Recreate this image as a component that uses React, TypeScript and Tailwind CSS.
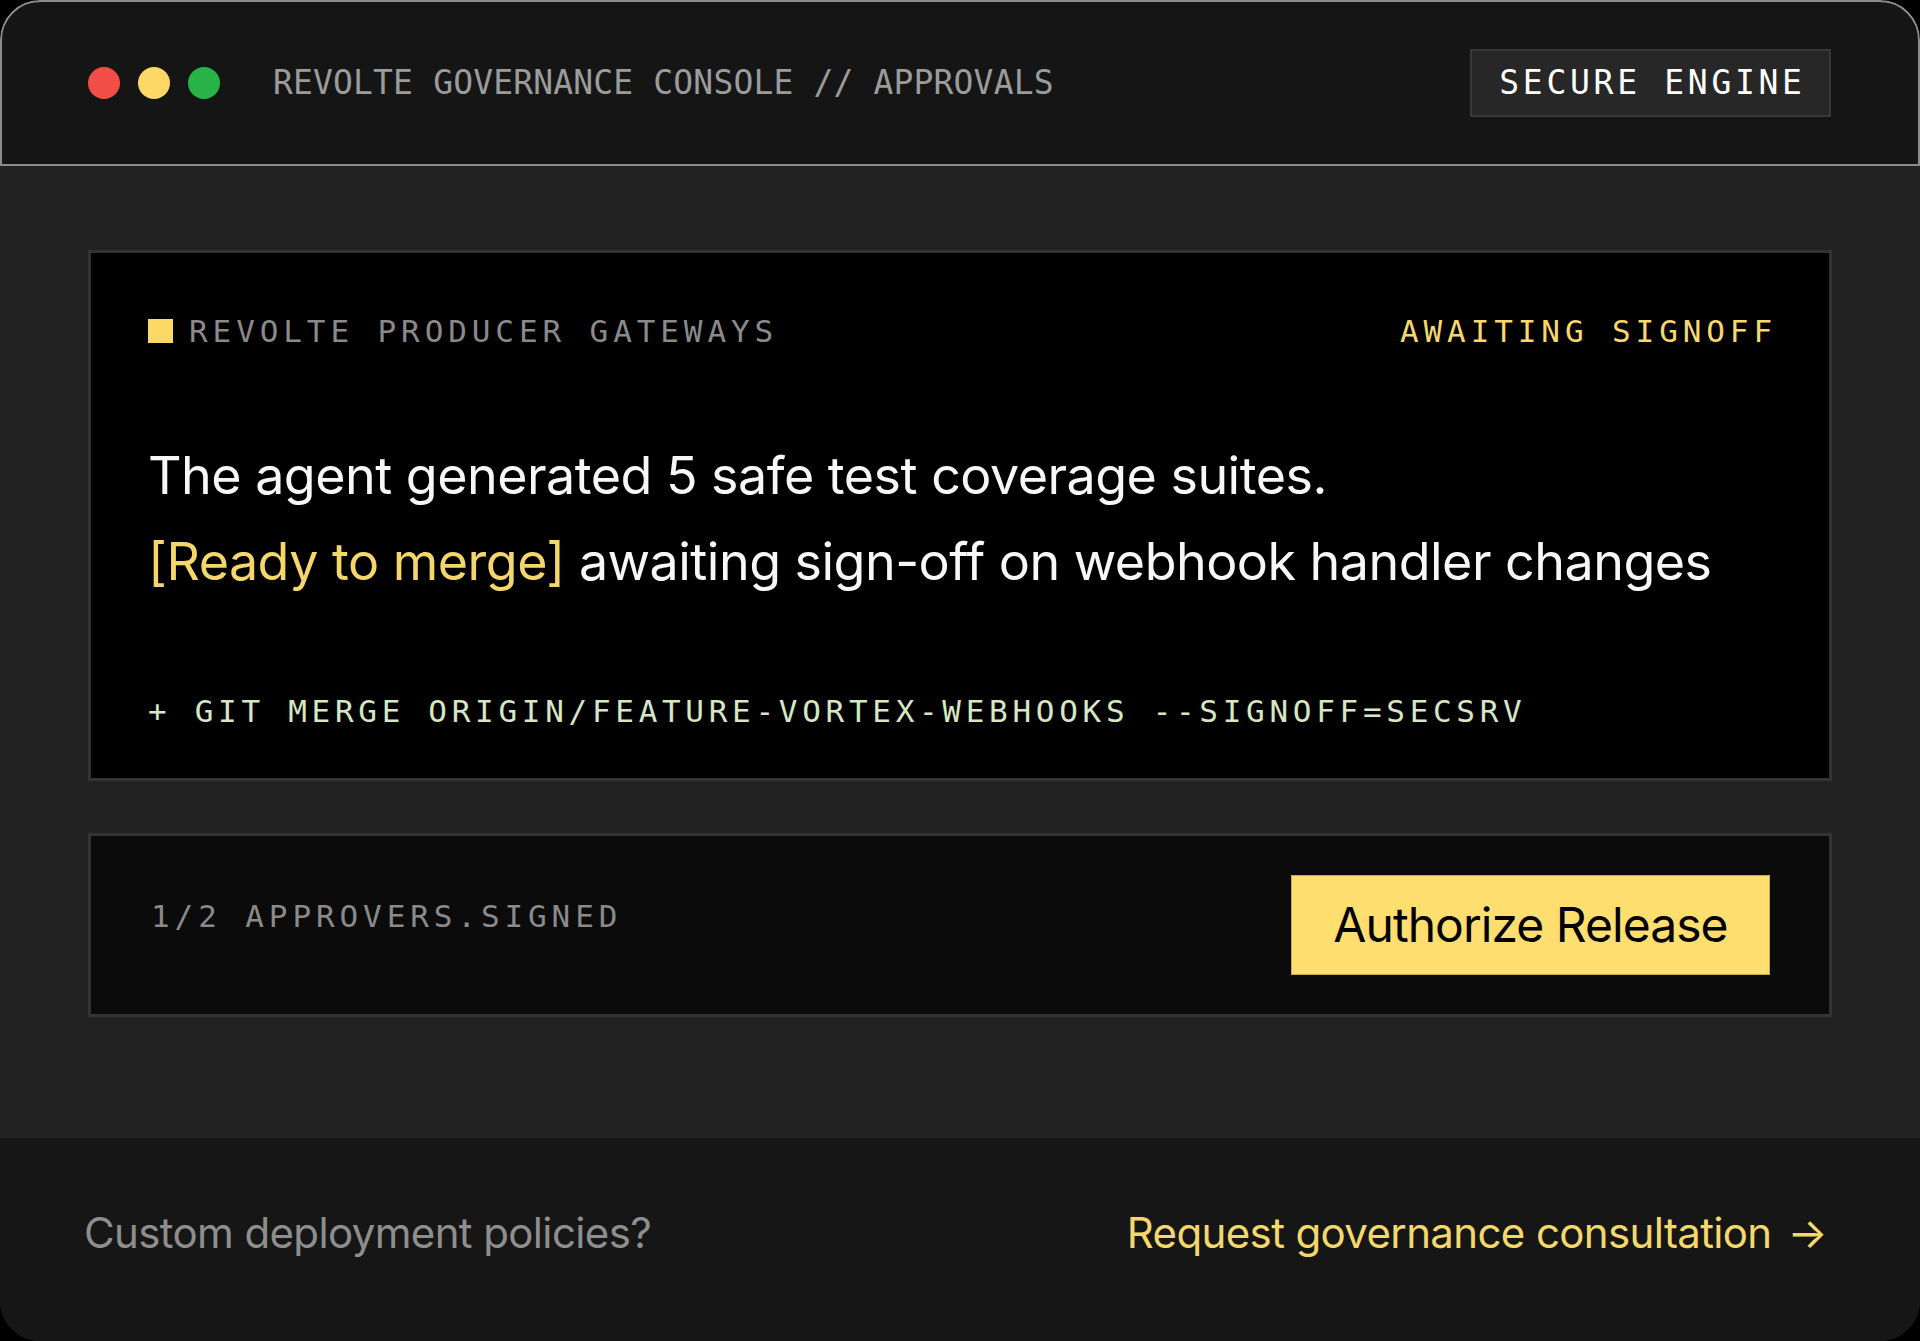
export default function App() {
  return (
    <div className="min-h-screen bg-black">
      <div className="flex h-[1341px] flex-col overflow-hidden rounded-[40px] bg-[#222222] font-['Inter',sans-serif]">
        {/* title bar */}
        <header className="flex h-[166px] shrink-0 items-center justify-between rounded-t-[40px] border-2 border-[#8c8c8c] bg-[#151515] pl-[86px] pr-[87px]">
          <div className="flex items-center">
            <div className="flex gap-[18px]">
              <span className="h-8 w-8 rounded-full bg-[#f24e47]" />
              <span className="h-8 w-8 rounded-full bg-[#fdd866]" />
              <span className="h-8 w-8 rounded-full bg-[#27b347]" />
            </div>
            <span className="ml-[53px] font-['DejaVu_Sans_Mono',monospace] text-[33px] leading-8 tracking-[0.15px] text-[#9b9b9b]">
              REVOLTE GOVERNANCE CONSOLE // APPROVALS
            </span>
          </div>
          <div className="flex h-[68px] w-[361px] items-center justify-center border-2 border-[#383838] bg-[#272727] pl-[4px] font-['DejaVu_Sans_Mono',monospace] text-[33px] leading-8 tracking-[3.7px] text-white">
            SECURE ENGINE
          </div>
        </header>

        <main className="flex flex-1 flex-col gap-[52px] px-[88px] pt-[84px]">
          {/* merge request */}
          <section className="h-[531px] border-[3px] border-[#333333] bg-black pl-[57px] pr-[52px] pt-[62px]">
            <div className="flex h-8 items-center justify-between font-['DejaVu_Sans_Mono',monospace] text-[31px] leading-8 tracking-[4.9px]">
              <div className="flex items-center gap-[16px]">
                <span className="h-6 w-[25px] bg-[#fcd964]" />
                <span className="text-[#8a8a8a]">REVOLTE PRODUCER GATEWAYS</span>
              </div>
              <span className="text-[#f6d86b]">AWAITING SIGNOFF</span>
            </div>
            <p className="mt-[86px] text-[52px] leading-[86px] tracking-[-0.01em] text-[#f7f7f7]">
              The agent generated 5 safe test coverage suites.
              <br />
              <span className="text-[#f5d66a]">[Ready to merge]</span> awaiting sign-off on webhook handler changes
            </p>
            <div className="mt-[90px] font-['DejaVu_Sans_Mono',monospace] text-[31px] leading-8 tracking-[4.7px] text-[#d5e7c3]">
              + GIT MERGE ORIGIN/FEATURE-VORTEX-WEBHOOKS --SIGNOFF=SECSRV
            </div>
          </section>

          {/* approvals */}
          <section className="flex h-[184px] items-center justify-between border-[3px] border-[#333333] bg-[#0b0b0b] pl-[60px] pr-[59px]">
            <span className="mb-[18px] font-['DejaVu_Sans_Mono',monospace] text-[31px] leading-8 tracking-[4.9px] text-[#8a8a8a]">
              1/2 APPROVERS.SIGNED
            </span>
            <button className="flex h-[100px] w-[479px] items-center justify-center border border-[#c9a94a] bg-[#fede6f] text-[48px] tracking-[-0.02em] text-black">
              Authorize Release
            </button>
          </section>
        </main>

        <footer className="flex h-[203px] shrink-0 items-center justify-between bg-[#161616] pb-[14px] pl-[84px] pr-[93px] text-[42px] tracking-[-0.015em]">
          <span className="text-[#8e8e8e]">Custom deployment policies?</span>
          <a className="flex items-center gap-[16px] text-[#f5d86c]">
            Request governance consultation
            <span>→</span>
          </a>
        </footer>
      </div>
    </div>
  )
}
